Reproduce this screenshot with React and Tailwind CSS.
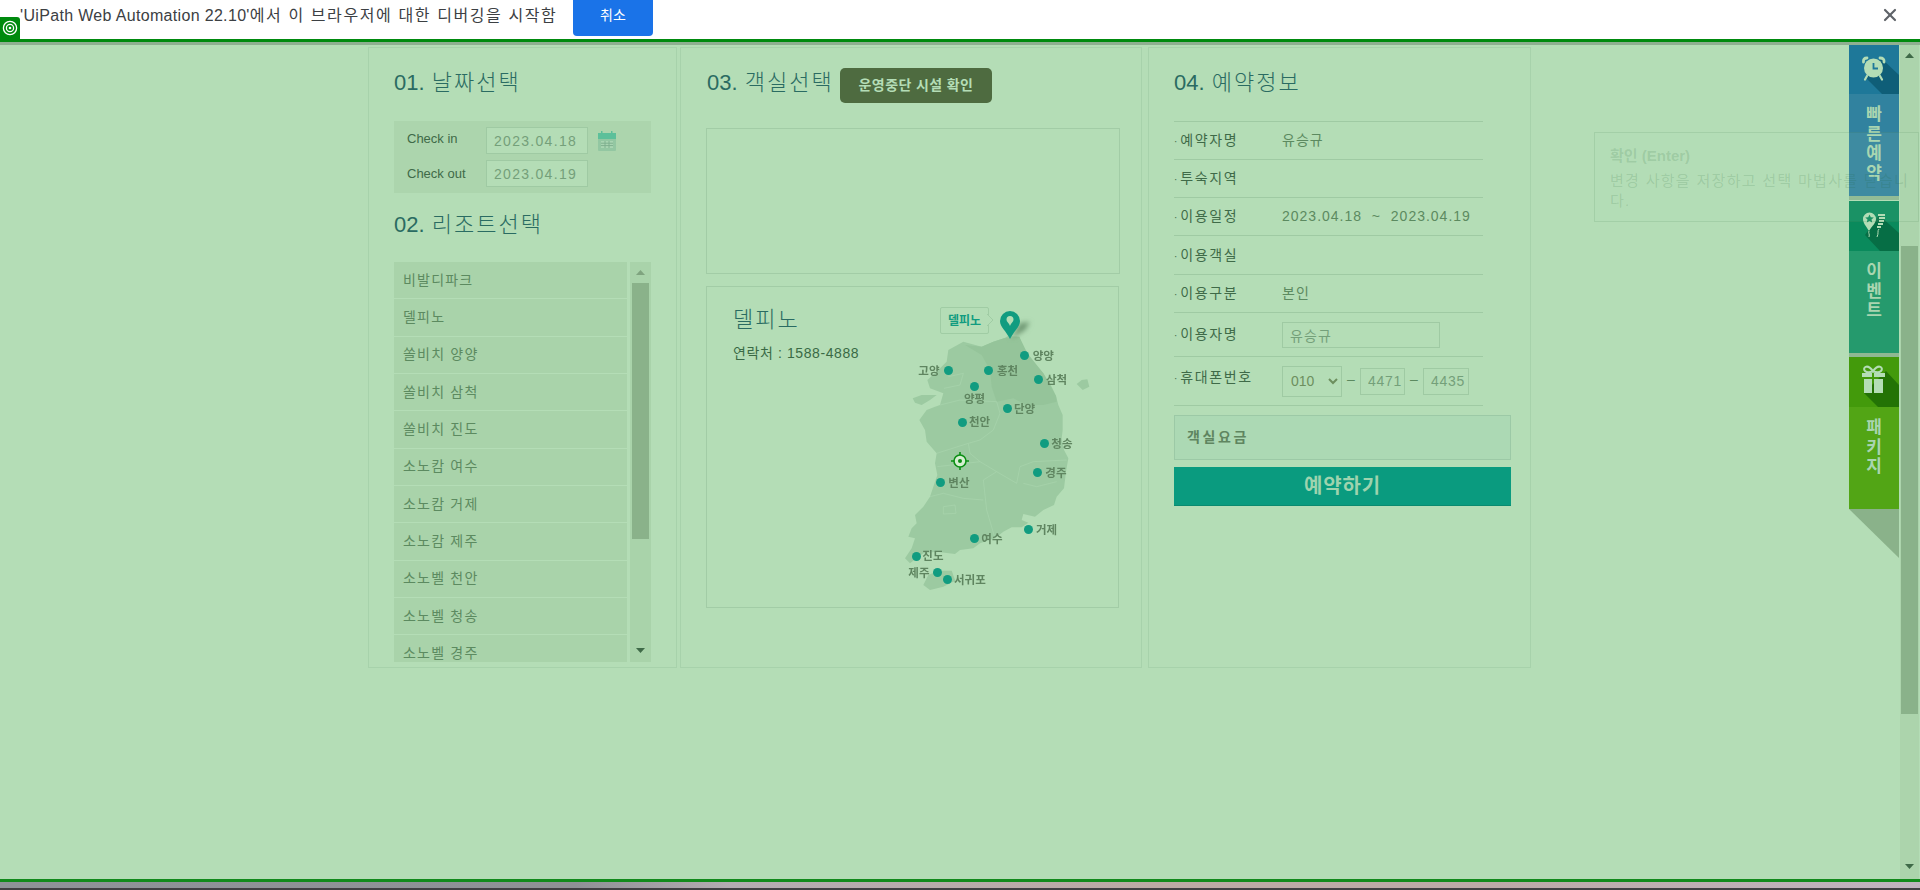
import { X } from 'lucide-react';

const RESORTS = [
  '비발디파크', '델피노', '쏠비치 양양', '쏠비치 삼척', '쏠비치 진도', '소노캄 여수',
  '소노캄 거제', '소노캄 제주', '소노벨 천안', '소노벨 청송', '소노벨 경주',
];

// Marker positions are in the map drawing's own units (3 units = 1px).
const MARKERS = [
  { name: '양양', x: 433, y: 197, lx: 458, ly: 197 },
  { name: '고양', x: 205, y: 242, lx: 115, ly: 244 },
  { name: '홍천', x: 325, y: 242, lx: 351, ly: 242 },
  { name: '삼척', x: 475, y: 268, lx: 498, ly: 270 },
  { name: '양평', x: 284, y: 288, lx: 252, ly: 327 },
  { name: '단양', x: 381, y: 355, lx: 402, ly: 356 },
  { name: '천안', x: 246, y: 396, lx: 267, ly: 396 },
  { name: '청송', x: 493, y: 460, lx: 514, ly: 462 },
  { name: '변산', x: 182, y: 576, lx: 205, ly: 578 },
  { name: '경주', x: 471, y: 546, lx: 496, ly: 548 },
  { name: '거제', x: 445, y: 719, lx: 468, ly: 721 },
  { name: '여수', x: 284, y: 745, lx: 304, ly: 746 },
  { name: '진도', x: 108, y: 798, lx: 127, ly: 798 },
  { name: '제주', x: 173, y: 847, lx: 85, ly: 849 },
  { name: '서귀포', x: 203, y: 867, lx: 222, ly: 870 },
];

function SectionTitle({ no, children }) {
  return (
    <h2 className="h-8 leading-8 text-[22px] font-light text-[#2a6b62] whitespace-nowrap">
      {no}. <span className="ml-px tracking-[2px]">{children}</span>
    </h2>
  );
}

function Triangle({ down, className }) {
  return (
    <svg width="9" height="5" viewBox="0 0 9 5" className={className}>
      <path d={down ? 'M0 0h9L4.5 5z' : 'M0 5h9L4.5 0z'} fill="currentColor" />
    </svg>
  );
}

function CalendarIcon() {
  return (
    <svg width="18" height="20" viewBox="0 0 18 20" className="ml-[10px] shrink-0">
      <rect x="0" y="2" width="18" height="18" rx="1" fill="#93c7a2" />
      <rect x="0" y="2" width="18" height="6" fill="#5cc09a" />
      <rect x="3" y="0" width="1.5" height="4" fill="#5cc09a" />
      <rect x="13" y="0" width="1.5" height="4" fill="#5cc09a" />
      <path d="M3 10h12v7H3z" fill="#a9d5b2" />
      <path d="M3 12.2h12M3 14.6h12M7 10v7M11 10v7" stroke="#7fb08f" strokeWidth="1" />
    </svg>
  );
}

function DatePanel() {
  return (
    <div className="mt-[22px] h-[72px] bg-[#acd5ad] pl-[13px] pt-[6px] flex flex-col gap-[6px]">
      <div className="flex items-center h-[27px]">
        <span className="w-[79px] text-[13px] text-[#3f6a48] -mt-[3px]">Check in</span>
        <input readOnly value="2023.04.18" className="w-[102px] h-[27px] bg-[#b4ddb6] border border-[#9fcaa3] px-[7px] text-[14px] tracking-[1.3px] text-[#74a07a] outline-none" />
        <CalendarIcon />
      </div>
      <div className="flex items-center h-[27px]">
        <span className="w-[79px] text-[13px] text-[#3f6a48]">Check out</span>
        <input readOnly value="2023.04.19" className="w-[102px] h-[27px] bg-[#b4ddb6] border border-[#9fcaa3] px-[7px] text-[14px] tracking-[1.3px] text-[#74a07a] outline-none" />
      </div>
    </div>
  );
}

function ResortList() {
  return (
    <div className="mt-[21px] flex gap-[3px] h-[400px]">
      <ul className="w-[233px] overflow-hidden">
        {RESORTS.map((name) => (
          <li key={name} className="h-[37.35px] bg-[#a9d3aa] border-b border-[#b4ddb6] pl-[9px] flex items-center text-[14px] tracking-[1.2px] text-[#5c8a60] whitespace-nowrap">
            {name}
          </li>
        ))}
      </ul>
      <div className="w-[21px] bg-[#a9d3aa] flex flex-col items-center">
        <div className="h-[21px] flex items-center justify-center">
          <Triangle className="text-[#7fa47f]" />
        </div>
        <div className="w-[17px] h-[256px] bg-[#8ab28a]" />
        <div className="flex-1 flex items-end pb-[9px]">
          <Triangle down className="text-[#3f6a48]" />
        </div>
      </div>
    </div>
  );
}

function KoreaMap() {
  return (
    <svg viewBox="0 0 720 948" className="w-[240px] h-[316px]">
      <path fill="#9ccaa1" d="M372 145 L385 138 L418 140 L425 165 L442 190 L465 222 L490 250 L515 290 L528 318 L535 345 L548 375 L548 420 L545 445 L552 480 L565 505 L558 545 L552 595 L530 620 L522 645 L490 660 L465 680 L430 672 L425 690 L445 698 L425 712 L395 712 L370 725 L345 745 L300 760 L280 775 L240 780 L225 792 L170 785 L130 790 L90 820 L75 805 L95 775 L105 745 L85 740 L95 715 L110 700 L105 675 L130 650 L150 620 L160 590 L172 555 L165 520 L170 490 L140 455 L135 420 L118 390 L140 360 L165 350 L180 345 L190 310 L150 295 L142 270 L175 240 L200 215 L205 180 L250 155 L305 170 L340 155 Z" />
      <path fill="#95c49a" d="M372 145 L418 140 L442 190 L490 250 L528 318 L530 335 L490 345 L440 345 L400 325 L350 335 L335 290 L330 240 L305 195 L255 165 L305 170 L340 155 Z" />
      <path fill="#9ccaa1" d="M130 885 L145 855 L175 842 L215 842 L226 872 L190 890 L150 900 Z" />
      <path fill="#9ccaa1" d="M590 282 L605 270 L622 268 L628 290 L608 300 Z" />
      <path fill="#9ccaa1" d="M98 325 L125 315 L170 315 L150 330 L125 345 L105 338 Z" />
      <g fill="none" stroke="#a9d5ad" strokeWidth="2">
        <path d="M205 260 L250 250 L240 285 L192 295" />
        <path d="M180 345 L240 330 L350 335 L360 370 L340 420 L300 450 L265 460 L270 490 L300 515 L350 545 L310 570 L320 660 L345 745" />
        <path d="M170 490 L265 460" />
        <path d="M172 530 L300 515" />
        <path d="M350 545 L410 580 L420 530 L460 515 L560 510" />
        <path d="M150 620 L190 610 L250 625 L310 630" />
        <path d="M190 650 L225 645 L228 670 L190 672 Z" />
        <path d="M430 580 L470 590 L530 575" />
      </g>
    </svg>
  );
}

function MapPanel() {
  return (
    <div className="relative mt-[12px] w-[413px] h-[322px] border border-[#a2cca6] pl-[26px] pt-[19px]">
      <p className="text-[22px] leading-7 font-light tracking-[2px] text-[#2a6b62]">델피노</p>
      <p className="mt-[9px] text-[14px] tracking-[0.6px] text-[#3a6a45]">연락처 : 1588-4888</p>

      <div className="absolute left-[173px] top-[3px] w-[240px] h-[316px]">
        <KoreaMap />
        {MARKERS.map((m) => (
          <span key={m.name}>
            <span
              className="absolute w-[9px] h-[9px] rounded-full bg-[#119c80]"
              style={{ left: m.x / 3 - 4.5, top: m.y / 3 - 4.5 }}
            />
            <span
              className="absolute text-[11.5px] leading-[14px] font-bold text-[#5f8560] whitespace-nowrap blur-[0.3px]"
              style={{ left: m.lx / 3, top: m.ly / 3 - 7 }}
            >
              {m.name}
            </span>
          </span>
        ))}

        {/* current position target */}
        <svg width="18" height="18" viewBox="0 0 18 18" className="absolute left-[71px] top-[162px]">
          <circle cx="9" cy="9" r="6" fill="#d6efd2" stroke="#0b8f14" strokeWidth="1.6" />
          <circle cx="9" cy="9" r="2" fill="#0b8f14" />
          <path d="M9 0v3M9 15v3M0 9h3M15 9h3" stroke="#0b8f14" strokeWidth="1.6" />
        </svg>

        {/* callout + pin */}
        <div className="absolute left-[60px] top-[17px] w-[49px] h-[27px] border border-[#a0cca4] rounded-[2px] bg-[#b4ddb6] flex items-center justify-center text-[12px] font-bold text-[#119c80]">
          델피노
          <svg width="7" height="12" viewBox="0 0 7 12" className="absolute -right-[6px] top-[6px]">
            <path d="M0 0 L6 6 L0 12" fill="#b4ddb6" stroke="#a0cca4" />
          </svg>
        </div>
        <svg width="44" height="32" viewBox="0 0 44 32" className="absolute left-[120px] top-[21px]">
          <defs>
            <filter id="pin-shadow" x="-50%" y="-50%" width="200%" height="200%">
              <feGaussianBlur stdDeviation="2.4" />
            </filter>
          </defs>
          <path d="M11 28 L20 12 L30 11 L25 19 Z" fill="#6f9873" filter="url(#pin-shadow)" />
          <path d="M10 28 C6 20 0 16 0 10 A10 10 0 0 1 20 10 C20 16 14 20 10 28z" fill="#119c80" />
          <path d="M10 15 C9 12 6.5 11 6.5 8.5 A3.5 3.5 0 0 1 13.5 8.5 C13.5 11 11 12 10 15z" fill="#b4ddb6" />
        </svg>
      </div>
    </div>
  );
}

function InfoRow({ label, height, children }) {
  return (
    <div className="flex items-center border-t border-[#9fcaa3] text-[14px]" style={{ height }}>
      <span className="w-[108px] shrink-0 text-[#3f6a48] tracking-[1.6px] whitespace-nowrap">
        <span className="text-[10px] tracking-normal mr-[3px]">·</span>{label}
      </span>
      <div className="text-[#5c8a60] tracking-[1px] whitespace-pre">{children}</div>
    </div>
  );
}

function ReservationPanel() {
  return (
    <section className="w-[383px] h-[621px] border border-[#a7d2ab] px-[25px] pt-[19px]">
      <SectionTitle no="04">예약정보</SectionTitle>
      <div className="mt-[22px] w-[309px] border-b border-[#9fcaa3]">
        <InfoRow label="예약자명" height={38}>유승규</InfoRow>
        <InfoRow label="투숙지역" height={38} />
        <InfoRow label="이용일정" height={38}>2023.04.18  ~  2023.04.19</InfoRow>
        <InfoRow label="이용객실" height={39} />
        <InfoRow label="이용구분" height={38}>본인</InfoRow>
        <InfoRow label="이용자명" height={44}>
          <input readOnly value="유승규" className="block w-[158px] h-[26px] border border-[#9fcaa3] px-[7px] text-[14px] tracking-[1.1px] text-[#74a07a] outline-none" />
        </InfoRow>
        <div className="flex h-[49px] items-center border-t border-[#9fcaa3] text-[14px]">
          <span className="w-[108px] shrink-0 -mt-[8px] text-[#3f6a48] tracking-[1.6px] whitespace-nowrap">
            <span className="text-[10px] tracking-normal mr-[3px]">·</span>휴대폰번호
          </span>
          <select className="w-[60px] h-[31px] border border-[#9fcaa3] pl-[4px] text-[14px] text-[#6d8f5e] outline-none">
            <option>010</option>
          </select>
          <span className="w-[18px] -mt-[4px] text-center text-[#5c8a60]">–</span>
          <input readOnly value="4471" className="w-[45px] h-[27px] border border-[#9fcaa3] pl-[7px] text-[14px] tracking-[0.7px] text-[#74a07a] outline-none" />
          <span className="w-[18px] -mt-[4px] text-center text-[#5c8a60]">–</span>
          <input readOnly value="4435" className="w-[46px] h-[27px] border border-[#9fcaa3] pl-[7px] text-[14px] tracking-[0.7px] text-[#74a07a] outline-none" />
        </div>
      </div>
      <div className="mt-[9px] w-[337px] h-[45px] bg-[#acd9b4] border border-[#9cc9a6] pl-[12px] flex items-center text-[14px] font-bold tracking-[2.6px] text-[#5f8560]">
        객실요금
      </div>
      <button className="block mt-[7px] w-[337px] h-[39px] bg-[#0a9b7f] border-b border-[#0b8a70] text-[20px] font-bold tracking-[0.8px] text-[#9ed3ae]">
        예약하기
      </button>
    </section>
  );
}

function AlarmIcon() {
  return (
    <svg width="50" height="49" viewBox="0 0 50 49" className="block">
      <path d="M17 33 L32 13 L50 30 V49 H33 Z" fill="#0f5e78" />
      <g stroke="#b4ddb6" strokeLinecap="round">
        <circle cx="24.5" cy="23" r="9.5" fill="#b4ddb6" stroke="none" />
        <path d="M18 31l-2 3.5M31 31l2 3.5" strokeWidth="2.2" />
        <path d="M14.5 17 Q14 13 18 13" strokeWidth="2.8" fill="none" />
        <path d="M35 17 Q35.5 13 31 13" strokeWidth="2.8" fill="none" />
      </g>
      <path d="M24.5 18v5.5h4.5" stroke="#1e7899" strokeWidth="1.8" fill="none" />
    </svg>
  );
}

function BalloonIcon() {
  return (
    <svg width="50" height="50" viewBox="0 0 50 50" className="block">
      <path d="M16 34 L30 14 L50 32 V50 H31 Z" fill="#066e45" />
      <path d="M20 30 C17 25 14 22 14 18 A6.5 6.5 0 0 1 27 18 C27 22 23 25 20 30z" fill="#b4ddb6" />
      <path d="M20.5 13.5l1.3 2.8 3 .3-2.3 2 .7 3-2.7-1.6-2.7 1.6.7-3-2.3-2 3-.3z" fill="#0a8a5c" />
      <path d="M29 14h7M30 17h6M30 20h5M29 23h5M28 26h4" stroke="#b4ddb6" strokeWidth="1.8" />
      <path d="M20 30c-1 2 1 3 0 6M30 28c-2 2 0 4-2 8" stroke="#b4ddb6" strokeWidth="1" fill="none" />
    </svg>
  );
}

function GiftIcon() {
  return (
    <svg width="50" height="50" viewBox="0 0 50 50" className="block">
      <path d="M15 36 L37 14 L50 28 V50 H29 Z" fill="#237305" />
      <path d="M24 14 C18 6 13 11 16 14 C18 16 22 15 24 14 C26 15 30 16 32 14 C35 11 30 6 24 14z" fill="none" stroke="#b4ddb6" strokeWidth="2" />
      <rect x="13" y="16" width="10" height="4" fill="#b4ddb6" />
      <rect x="25" y="16" width="11" height="4" fill="#b4ddb6" />
      <rect x="15" y="22" width="8" height="14" fill="#b4ddb6" />
      <rect x="25" y="22" width="9" height="14" fill="#b4ddb6" />
    </svg>
  );
}

function SideTab({ icon, chars, iconBg, labelBg }) {
  return (
    <div className="w-[50px]">
      <div className={iconBg}>{icon}</div>
      <div className={`${labelBg} h-[102px] pt-[11px] flex flex-col items-center text-[17px] leading-[19.5px] font-bold text-[#a9d5b0]`}>
        {chars.map((c) => <span key={c}>{c}</span>)}
      </div>
    </div>
  );
}

function SideTabs() {
  return (
    <aside className="absolute right-[21px] top-[45px] w-[50px] flex flex-col">
      <SideTab icon={<AlarmIcon />} chars={['빠', '른', '예', '약']} iconBg="bg-[#1e7899]" labelBg="bg-[#31829f]" />
      <div className="h-[4px] mb-px bg-[#8fb892]" />
      <SideTab icon={<BalloonIcon />} chars={['이', '벤', '트']} iconBg="bg-[#0a8a5c]" labelBg="bg-[#259a6d]" />
      <div className="h-[4px] bg-[#8fb892]" />
      <SideTab icon={<GiftIcon />} chars={['패', '키', '지']} iconBg="bg-[#439a0b]" labelBg="bg-[#52a515]" />
      <svg width="50" height="49" viewBox="0 0 50 49" className="block">
        <path d="M0 0h50v49z" fill="#8ab28a" />
      </svg>
    </aside>
  );
}

export default function App() {
  return (
    <div className="relative w-[1920px] h-[890px] overflow-hidden flex flex-col bg-[#b4ddb6] font-['Liberation_Sans','Noto_Sans_CJK_KR',sans-serif]">
      {/* debugger notice bar */}
      <header className="h-[39px] shrink-0 bg-white flex items-start">
        <div className="self-end w-5 h-[22px] bg-[#008a0e] rounded-tr-[3px] flex items-center justify-center">
          <svg width="16" height="16" viewBox="0 0 16 16">
            <circle cx="8" cy="8" r="6.6" fill="none" stroke="#fff" strokeWidth="1.3" />
            <circle cx="8" cy="8" r="3.6" fill="none" stroke="#fff" strokeWidth="1.3" />
            <circle cx="8" cy="8" r="1.3" fill="#fff" />
          </svg>
        </div>
        <p className="w-[553px] h-8 leading-8 text-[16px] tracking-[1.6px] text-[#3c4043] whitespace-nowrap">
          <span className="tracking-[0.33px]">'UiPath Web Automation 22.10'</span>에서 이 브라우저에 대한 디버깅을 시작함
        </p>
        <button className="w-[80px] h-9 bg-[#1a73e8] text-white text-[14px] rounded-b-[4px] pb-[5px]">취소</button>
        <X size={20} strokeWidth={2.6} className="ml-auto mr-[20px] mt-[5px] text-[#5f6368]" />
      </header>
      <div className="h-[3px] shrink-0 bg-[#008a0e]" />
      <div className="h-[3px] shrink-0 bg-[#8faf91]" />

      <main className="flex-1 min-h-0 flex">
        <div className="flex-1 pl-[368px] pt-[2px] flex items-start">
          <section className="w-[309px] h-[621px] border border-[#a7d2ab] px-[25px] pt-[19px]">
            <SectionTitle no="01">날짜선택</SectionTitle>
            <DatePanel />
            <div className="mt-[16px]">
              <SectionTitle no="02">리조트선택</SectionTitle>
            </div>
            <ResortList />
          </section>

          <section className="ml-[3px] w-[462px] h-[621px] border border-[#a7d2ab] pl-[25px] pt-[20px]">
            <div className="flex items-start">
              <div className="-mt-px ml-px w-[133px]">
                <SectionTitle no="03">객실선택</SectionTitle>
              </div>
              <button className="w-[152px] h-[35px] bg-[#4e6b40] rounded-[5px] text-[14px] tracking-[0.4px] font-bold text-[#b4ddb6]">
                운영중단 시설 확인
              </button>
            </div>
            <div className="mt-[25px] w-[414px] h-[146px] border border-[#a2cca6]" />
            <MapPanel />
          </section>

          <div className="ml-[6px]">
            <ReservationPanel />
          </div>
        </div>

        <div className="w-[20px] shrink-0 pr-px">
          <div className="h-full bg-[#acd4ac] flex flex-col items-center">
            <div className="h-[201px] pt-[8px]">
              <Triangle className="text-[#3f6a48]" />
            </div>
            <div className="w-[17px] h-[468px] bg-[#8ab28a]" />
            <div className="flex-1 flex items-end pb-[10px]">
              <Triangle down className="text-[#3f6a48]" />
            </div>
          </div>
        </div>
      </main>

      <div className="h-[3px] shrink-0 bg-[#128a1c]" />
      <div className="h-[6px] shrink-0 bg-[linear-gradient(90deg,#8e9298_0%,#8f9196_30%,#b4acb2_38%,#bcaaa5_60%,#bcaaa8_78%,#c0b4c0_100%)]" />
      <div className="h-[2px] shrink-0 bg-[#414044]" />

      <SideTabs />

      {/* hover tooltip, drawn over the side tabs */}
      <div className="absolute left-[1594px] top-[132px] w-[325px] h-[90px] border border-[#1a5c2a]/10 bg-[#b4ddb6]/10 pl-[15px] pt-[11px] text-[#1a5c2a]/15">
        <p className="text-[15px] leading-6 font-bold">확인 (Enter)</p>
        <p className="mt-[3px] text-[15px] leading-[20px] tracking-[1.3px] whitespace-nowrap">
          변경 사항을 저장하고 선택 마법사를 닫습니<br />다.
        </p>
      </div>
    </div>
  );
}
